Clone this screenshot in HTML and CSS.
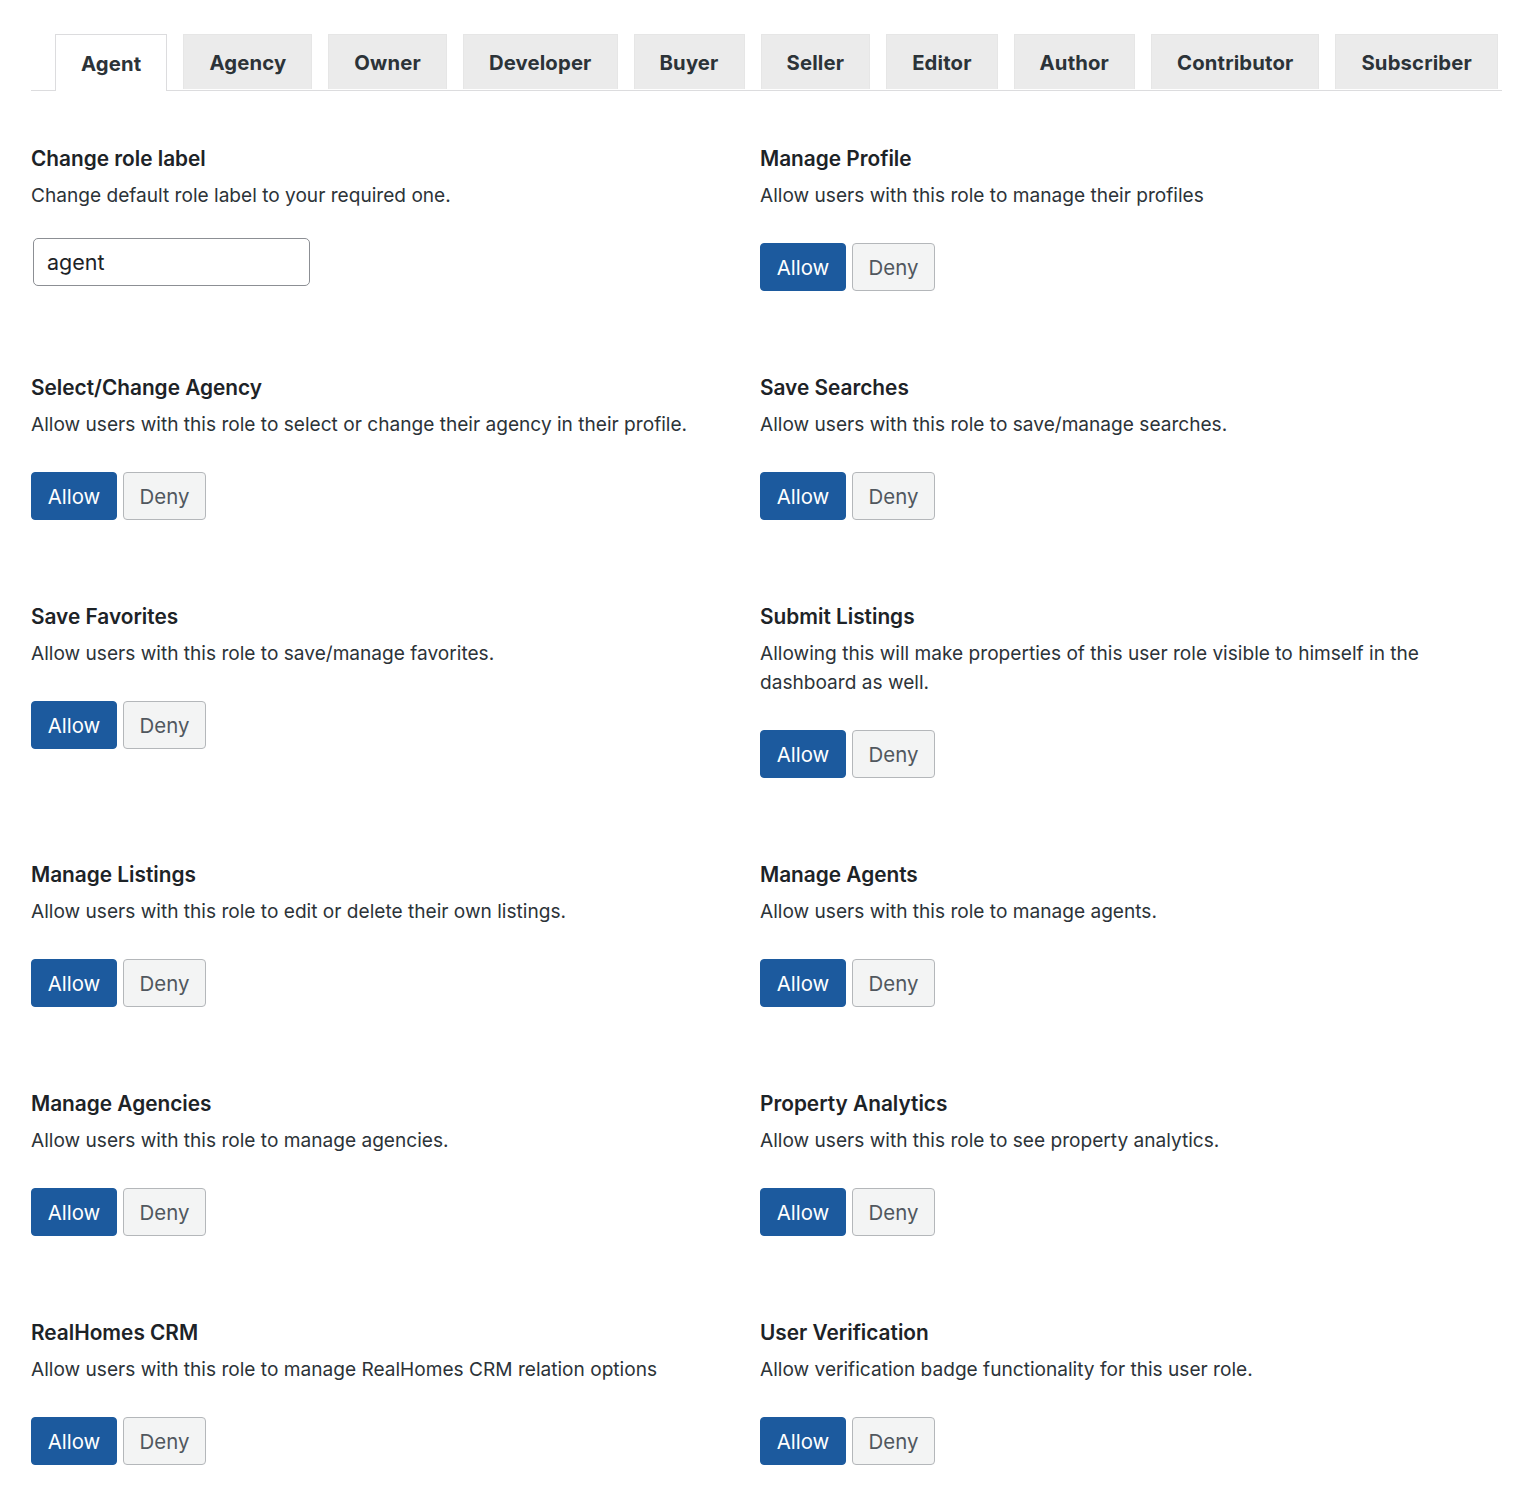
FILE: index.html
```html
<!DOCTYPE html>
<html lang="en">
<head>
<meta charset="utf-8">
<title>Role Settings</title>
<link rel="stylesheet" href="styles.css">
</head>
<body>
<div class="wrap">
  <nav class="tabs">
    <a class="tab active">Agent</a>
    <a class="tab">Agency</a>
    <a class="tab">Owner</a>
    <a class="tab">Developer</a>
    <a class="tab">Buyer</a>
    <a class="tab">Seller</a>
    <a class="tab">Editor</a>
    <a class="tab">Author</a>
    <a class="tab">Contributor</a>
    <a class="tab">Subscriber</a>
  </nav>
  <div class="grid">
    <section class="field">
      <h3>Change role label</h3>
      <p>Change default role label to your required one.</p>
      <input class="text-input" type="text" value="agent">
    </section>
    <section class="field">
      <h3>Manage Profile</h3>
      <p>Allow users with this role to manage their profiles</p>
      <div class="toggle"><button class="btn allow">Allow</button><button class="btn deny">Deny</button></div>
    </section>
    <section class="field">
      <h3>Select/Change Agency</h3>
      <p>Allow users with this role to select or change their agency in their profile.</p>
      <div class="toggle"><button class="btn allow">Allow</button><button class="btn deny">Deny</button></div>
    </section>
    <section class="field">
      <h3>Save Searches</h3>
      <p>Allow users with this role to save/manage searches.</p>
      <div class="toggle"><button class="btn allow">Allow</button><button class="btn deny">Deny</button></div>
    </section>
    <section class="field">
      <h3>Save Favorites</h3>
      <p>Allow users with this role to save/manage favorites.</p>
      <div class="toggle"><button class="btn allow">Allow</button><button class="btn deny">Deny</button></div>
    </section>
    <section class="field">
      <h3>Submit Listings</h3>
      <p>Allowing this will make properties of this user role visible to himself in the dashboard as well.</p>
      <div class="toggle"><button class="btn allow">Allow</button><button class="btn deny">Deny</button></div>
    </section>
    <section class="field">
      <h3>Manage Listings</h3>
      <p>Allow users with this role to edit or delete their own listings.</p>
      <div class="toggle"><button class="btn allow">Allow</button><button class="btn deny">Deny</button></div>
    </section>
    <section class="field">
      <h3>Manage Agents</h3>
      <p>Allow users with this role to manage agents.</p>
      <div class="toggle"><button class="btn allow">Allow</button><button class="btn deny">Deny</button></div>
    </section>
    <section class="field">
      <h3>Manage Agencies</h3>
      <p>Allow users with this role to manage agencies.</p>
      <div class="toggle"><button class="btn allow">Allow</button><button class="btn deny">Deny</button></div>
    </section>
    <section class="field">
      <h3>Property Analytics</h3>
      <p>Allow users with this role to see property analytics.</p>
      <div class="toggle"><button class="btn allow">Allow</button><button class="btn deny">Deny</button></div>
    </section>
    <section class="field">
      <h3>RealHomes CRM</h3>
      <p>Allow users with this role to manage RealHomes CRM relation options</p>
      <div class="toggle"><button class="btn allow">Allow</button><button class="btn deny">Deny</button></div>
    </section>
    <section class="field">
      <h3>User Verification</h3>
      <p>Allow verification badge functionality for this user role.</p>
      <div class="toggle"><button class="btn allow">Allow</button><button class="btn deny">Deny</button></div>
    </section>
  </div>
</div>
</body>
</html>
```
FILE: styles.css
```css
html, body {
  margin: 0;
  padding: 0;
  background: #ffffff;
}
body {
  font-family: Inter, "Noto Sans", "Liberation Sans", sans-serif;
  color: #1d2327;
}
.wrap {
  padding: 34px 28px 0 31px;
}
.tabs {
  display: flex;
  gap: 16px;
  padding-left: 24px;
  border-bottom: 1px solid #dcdcde;
  height: 56px;
}
.tab {
  display: flex;
  align-items: center;
  height: 55px;
  padding: 0 25px;
  background: #ebebeb;
  border: 1px solid #e6e6e6;
  border-bottom: none;
  font-size: 20.3px;
  font-weight: 700;
  color: #2c3338;
  letter-spacing: 0.15px;
  box-sizing: border-box;
}
.tab.active {
  background: #ffffff;
  border-color: #dcdcde;
  height: 57px;
  margin-bottom: -1px;
}
.grid {
  display: grid;
  grid-template-columns: 729px 1fr;
  padding-top: 54px;
}
.field {
  padding-bottom: 83px;
}
.field h3 {
  margin: 0;
  font-size: 20.8px;
  line-height: 28px;
  font-weight: 600;
  color: #1d2327;
}
.field p {
  margin: 8px 0 0;
  font-size: 19.1px;
  line-height: 29px;
  color: #2c3338;
  max-width: 680px;
}
.text-input {
  display: block;
  margin: 28px 0 0 2px;
  width: 277px;
  height: 48px;
  box-sizing: border-box;
  border: 1px solid #8c8f94;
  border-radius: 5px;
  padding: 0 13px;
  font-family: inherit;
  font-size: 21.5px;
  color: #1d2327;
  background: #fff;
}
.toggle {
  display: flex;
  gap: 6px;
  margin-top: 33px;
}
.btn {
  height: 48px;
  box-sizing: border-box;
  border-radius: 4px;
  font-family: inherit;
  font-size: 20.4px;
  padding: 0;
  cursor: pointer;
}
.btn.allow {
  width: 86px;
  background: #1c5a9e;
  border: 1px solid #1c5a9e;
  color: #ffffff;
}
.btn.deny {
  width: 83px;
  background: #f3f4f4;
  border: 1px solid #b4b7ba;
  color: #50575e;
}
```
